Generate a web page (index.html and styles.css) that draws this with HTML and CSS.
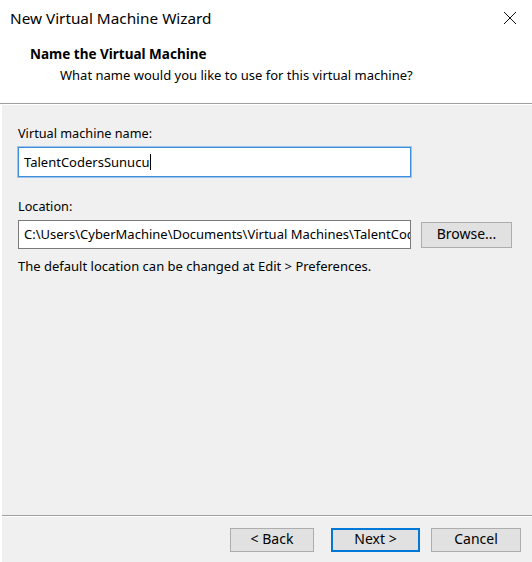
FILE: index.html
```html
<!DOCTYPE html>
<html lang="en">
<head>
  <meta charset="UTF-8" />
  <title>New Virtual Machine Wizard</title>
  <link rel="stylesheet" href="styles.css">
</head>
<body>
  <div class="wizard">
    <div class="titlebar">
      <span class="title">New Virtual Machine Wizard</span>
      <svg class="close" width="14" height="14" viewBox="0 0 14 14">
        <path d="M1 1 L13 13 M13 1 L1 13" stroke="#111" stroke-width="1" fill="none" />
      </svg>
    </div>

    <div class="header">
      <h1>Name the Virtual Machine</h1>
      <p>What name would you like to use for this virtual machine?</p>
    </div>

    <div class="content">
      <div class="label">Virtual machine name:</div>
      <div class="field focused">TalentCodersSunucu<span class="caret"></span></div>

      <div class="label location-label">Location:</div>
      <div class="row">
        <div class="field path">C:\Users\CyberMachine\Documents\Virtual Machines\TalentCoders</div>
        <button class="btn browse">Browse...</button>
      </div>
      <div class="hint">The default location can be changed at Edit &gt; Preferences.</div>
    </div>

    <div class="footer">
      <button class="btn back">&lt; Back</button>
      <button class="btn next">Next &gt;</button>
      <button class="btn cancel">Cancel</button>
    </div>
  </div>
</body>
</html>
```

FILE: styles.css
```css
body {
  margin: 0;
  font-family: 'Segoe UI', 'Noto Sans', sans-serif;
  font-size: 13px;
  color: #000;
  background: #fff;
}

.wizard {
  width: 532px;
  height: 562px;
  display: flex;
  flex-direction: column;
  background: #fff;
}

.titlebar {
  height: 36px;
  display: flex;
  align-items: center;
  justify-content: space-between;
  padding: 0 15px 0 10px;
}

.title {
  font-size: 15.3px;
}

.close {
  display: block;
}

.header {
  height: 68px;
  box-sizing: border-box;
  padding: 9px 0 0 30px;
  border-bottom: 1px solid #a0a0a0;
}

.header h1 {
  margin: 0;
  font-size: 13.5px;
  font-weight: bold;
  line-height: 18px;
}

.header p {
  margin: 4px 0 0 30px;
  line-height: 16px;
}

.content {
  flex: 1;
  margin-left: 2px;
  padding: 20px 0 0 16px;
  background: #f0f0f0;
  border-top: 1px solid #fff;
  border-bottom: 1px solid #a0a0a0;
}

.label {
  font-size: 12.7px;
  line-height: 16px;
  margin-bottom: 6px;
}

.location-label {
  margin-top: 21px;
}

.field {
  width: 393px;
  height: 30px;
  box-sizing: border-box;
  padding: 0 5px;
  line-height: 28px;
  background: #fff;
  border: 1px solid #7a7a7a;
  white-space: nowrap;
  overflow: hidden;
}

.field.focused {
  border-color: #3c8fdc;
  box-shadow: 0 0 0 1px rgba(60, 143, 220, 0.45);
}

.caret {
  display: inline-block;
  width: 1px;
  height: 16px;
  margin-left: 1px;
  background: #000;
  vertical-align: -3px;
}

.row {
  display: flex;
  align-items: center;
}

.field.path {
  height: 29px;
  line-height: 27px;
}

.btn {
  font-family: inherit;
  font-size: 14px;
  color: #000;
  background: #e1e1e1;
  border: 1px solid #adadad;
  padding: 0 0 2px;
  height: 24px;
  line-height: 18px;
}

.browse {
  width: 91px;
  height: 26px;
  margin-left: 10px;
}

.hint {
  margin-top: 9px;
  line-height: 16px;
}

.footer {
  height: 46px;
  box-sizing: border-box;
  margin-left: 2px;
  padding: 11px 11px 0 0;
  display: flex;
  justify-content: flex-end;
  align-items: flex-start;
  background: #f0f0f0;
  border-top: 1px solid #fff;
}

.back {
  width: 84px;
}

.next {
  width: 89px;
  margin-left: 17px;
  border: 2px solid #0078d7;
}

.cancel {
  width: 90px;
  margin-left: 11px;
}
```
